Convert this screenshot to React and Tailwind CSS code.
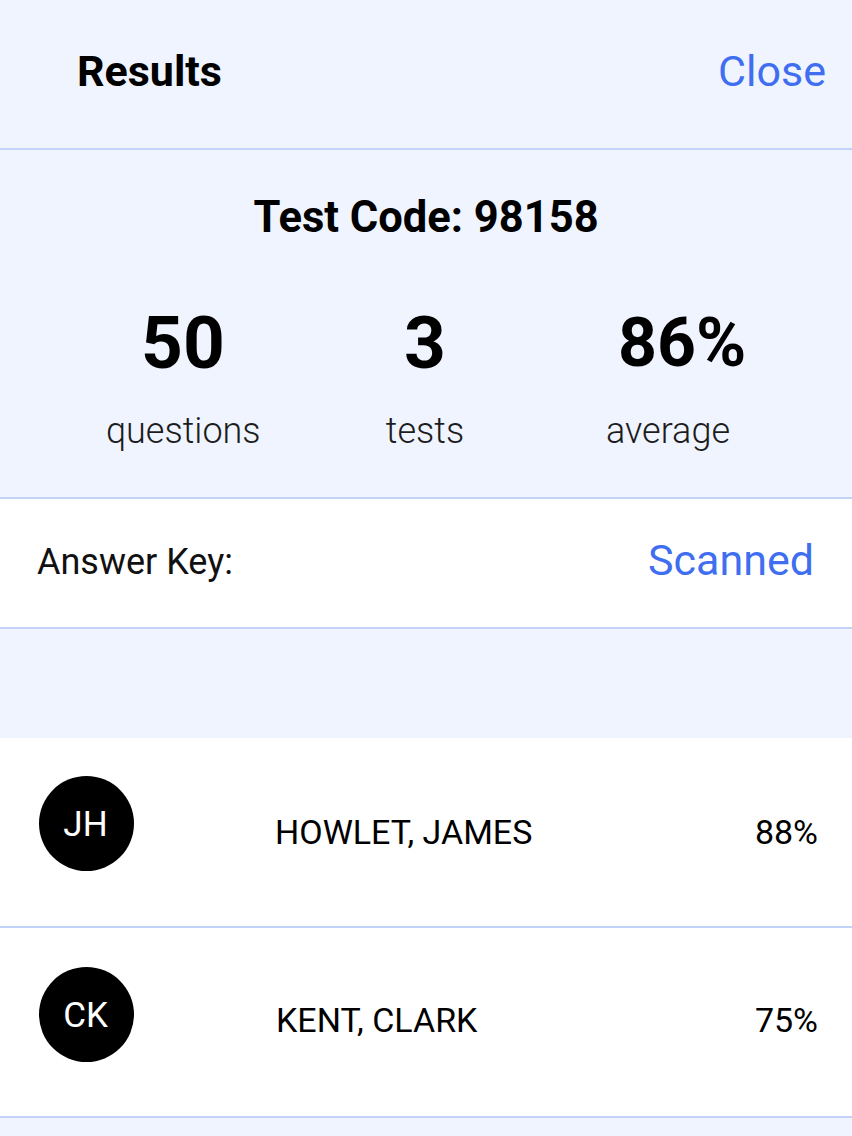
function Stat({ value, label, width, offset, valueClass }) {
  return (
    <div className={`text-center ${width} ${offset}`}>
      <div className={`h-[80px] leading-[80px] font-bold text-black whitespace-nowrap ${valueClass}`}>{value}</div>
      <div className="mt-[26px] text-[36px] leading-[44px] font-light text-[#1c1c1c]">{label}</div>
    </div>
  );
}

function Student({ initials, name, score, nameOffset, nameTop, scoreTop, avatarTop }) {
  return (
    <div className="flex items-start h-[190px] bg-white border-b-2 border-[#c2d2f9]">
      <div className={`ml-[39px] w-[95px] h-[95px] rounded-full bg-black text-white flex items-center justify-center pt-[2px] pr-[2px] text-[35px] leading-[40px] ${avatarTop}`}>
        {initials}
      </div>
      <div className={`text-[34px] leading-[40px] text-black ${nameOffset} ${nameTop}`}>{name}</div>
      <div className={`ml-auto mr-[34px] text-[34px] leading-[40px] text-black ${scoreTop}`}>{score}</div>
    </div>
  );
}

export default function App() {
  return (
    <div className="w-[852px] h-[1136px] overflow-hidden bg-[#eff4ff] font-['Roboto',sans-serif]">
      <div className="h-[150px] flex justify-between items-start border-b-2 border-[#c2d2f9]">
        <div className="ml-[77px] mt-[47px] text-[43px] leading-[48px] font-bold text-black">Results</div>
        <div className="mr-[26px] mt-[46px] text-[43px] leading-[50px] text-[#3f6ff0]">Close</div>
      </div>
      <div className="h-[349px] border-b-2 border-[#c2d2f9]">
        <div className="pt-[44px] text-center text-[43.5px] leading-[48px] font-bold text-black">Test Code: 98158</div>
        <div className="mt-[61px] flex">
          <Stat value="50" label="questions" width="w-[154px]" offset="ml-[106px]" valueClass="text-[73px]" />
          <Stat value="3" label="tests" width="w-[80px]" offset="ml-[125px]" valueClass="text-[73px]" />
          <Stat value="86%" label="average" width="w-[130px]" offset="ml-[138px]" valueClass="text-[68px] pl-[15px] text-left" />
        </div>
      </div>
      <div className="h-[130px] bg-white border-b-2 border-[#c2d2f9] flex justify-between items-center pl-[37px] pr-[38px]">
        <div className="text-[36px] leading-[44px] text-[#111] mb-[2px]">Answer Key:</div>
        <div className="text-[43px] leading-[50px] text-[#3f6ff0] mb-[6px]">Scanned</div>
      </div>
      <div className="h-[109px]"></div>
      <Student initials="JH" name="HOWLET, JAMES" score="88%" avatarTop="mt-[38px]" nameOffset="ml-[141px]" nameTop="mt-[74px]" scoreTop="mt-[74px]" />
      <Student initials="CK" name="KENT, CLARK" score="75%" avatarTop="mt-[39px]" nameOffset="ml-[142px]" nameTop="mt-[72px]" scoreTop="mt-[72px]" />
    </div>
  );
}
